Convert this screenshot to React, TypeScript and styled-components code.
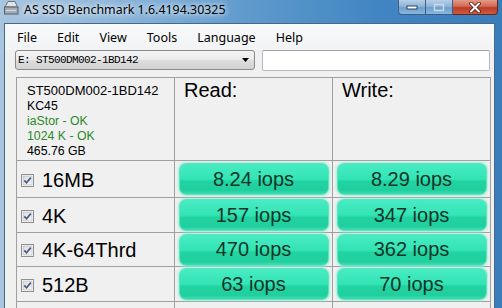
import { Fragment } from "react";
import styled, { createGlobalStyle } from "styled-components";

const GlobalStyle = createGlobalStyle`
  html, body {
    margin: 0;
    padding: 0;
    background: #3e82bf;
  }
  #root {
    width: 502px;
    height: 308px;
    overflow: hidden;
  }
`;

const Window = styled.div`
  width: 502px;
  height: 308px;
  display: flex;
  flex-direction: column;
  overflow: hidden;
  background: linear-gradient(90deg, #a9c5df 0%, #89b4da 25%, #5e99cc 50%, #4186c2 75%, #3a7dbb 100%);
`;

const TitleBar = styled.div`
  height: 23px;
  flex-shrink: 0;
  display: flex;
  align-items: flex-start;
  padding-left: 2px;
`;

const TitleIcon = styled.svg`
  width: 17px;
  height: 17px;
  flex-shrink: 0;
`;

const Title = styled.div`
  margin-left: 5px;
  margin-top: 2px;
  font-family: "Noto Sans", "Liberation Sans", sans-serif;
  font-size: 12.4px;
  line-height: 16px;
  color: #000;
  text-shadow: 0 0 5px #fff, 0 0 9px rgba(255, 255, 255, 0.85);
`;

const CaptionGroup = styled.div`
  margin-left: auto;
  margin-right: 4px;
  display: flex;
`;

const CaptionButton = styled.div<{ $kind: "min" | "max" | "close" }>`
  height: 15px;
  width: ${(p) => (p.$kind === "close" ? "45px" : p.$kind === "min" ? "28px" : "27px")};
  box-sizing: border-box;
  display: flex;
  align-items: center;
  justify-content: center;
  border: 1px solid ${(p) => (p.$kind === "close" ? "#5b2a25" : "#3d5f85")};
  border-top: none;
  border-left: ${(p) => (p.$kind === "min" ? "1px solid #3d5f85" : "none")};
  border-bottom-left-radius: ${(p) => (p.$kind === "min" ? "4px" : "0")};
  border-bottom-right-radius: ${(p) => (p.$kind === "close" ? "4px" : "0")};
  background: ${(p) =>
    p.$kind === "close"
      ? "linear-gradient(180deg, #e39a87 0%, #d06a55 45%, #bd3c27 55%, #d2583c 100%)"
      : "linear-gradient(180deg, #b6cfe6 0%, #8fb5d9 45%, #6e9ecb 55%, #8ab7de 100%)"};
`;

const Frame = styled.div`
  flex: 1;
  min-height: 0;
  display: flex;
  padding: 0 7px 0 4px;
`;

const Client = styled.div`
  flex: 1;
  display: flex;
  flex-direction: column;
  border: 1px solid #4a6785;
  border-bottom: none;
  background: #f0f0f0;
`;

const MenuBar = styled.div`
  height: 26px;
  flex-shrink: 0;
  display: flex;
  align-items: center;
  padding: 1px 0 0 2px;
  box-sizing: border-box;
  background: linear-gradient(180deg, #f8f9fa 0%, #f2f3f5 100%);
`;

const MenuItem = styled.span`
  padding: 0 10px;
  font-family: "Noto Sans", "Liberation Sans", sans-serif;
  font-size: 12.5px;
  color: #000;
`;

const ToolRow = styled.div`
  display: flex;
  align-items: flex-start;
  gap: 7px;
  padding-left: 10px;
  height: 21px;
`;

const DriveCombo = styled.div`
  width: 240px;
  height: 20px;
  box-sizing: border-box;
  display: flex;
  align-items: center;
  padding: 0 5px 0 2px;
  border: 1px solid #8a8a8a;
  border-radius: 3px;
  background: linear-gradient(180deg, #f3f3f3 0%, #ebebeb 48%, #dddddd 52%, #d2d2d2 100%);
  font-family: "Liberation Mono", monospace;
  font-size: 11px;
  letter-spacing: -0.6px;
  color: #000;
`;

const ComboArrow = styled.svg`
  margin-left: auto;
  width: 7px;
  height: 4px;
`;

const InfoBox = styled.div`
  width: 228px;
  height: 21px;
  box-sizing: border-box;
  border: 1px solid #b5b8bd;
  border-top-color: #9ea2a8;
  border-radius: 2px;
  background: #fff;
`;

const ResultGrid = styled.div`
  margin: 6px 0 0 11px;
  width: 475px;
  box-sizing: border-box;
  display: grid;
  grid-template-columns: 157px 157px 157px;
  grid-template-rows: 82px 36px 34px 33px 34px 30px;
  gap: 1px;
  padding: 1px;
  background: #a0a0a0;
`;

const Cell = styled.div`
  background: #f0f0f0;
  display: flex;
  align-items: center;
`;

const DiskInfo = styled(Cell)`
  flex-direction: column;
  align-items: flex-start;
  padding: 4px 0 0 10px;
  font-family: "Liberation Sans", Arial, sans-serif;
  color: #000;
`;

const DiskName = styled.div`
  font-size: 13px;
  line-height: 17px;
`;

const InfoLine = styled.div<{ $ok?: boolean }>`
  font-size: 12.3px;
  line-height: 15px;
  color: ${(p) => (p.$ok ? "#2a8a2a" : "#000")};
`;

const HeaderCell = styled(Cell)`
  align-items: flex-start;
  padding: 1px 0 0 9px;
  font-family: "Liberation Sans", Arial, sans-serif;
  font-size: 20px;
  line-height: 23px;
  color: #000;
`;

const LabelCell = styled(Cell)`
  padding: 2px 0 0 4px;
  gap: 8px;
  font-family: "Liberation Sans", Arial, sans-serif;
  font-size: 20px;
  color: #000;
`;

const CheckBox = styled.svg`
  width: 13px;
  height: 13px;
  flex-shrink: 0;
`;

const ValueCell = styled(Cell)`
  justify-content: center;
`;

const ResultButton = styled.div`
  width: 150px;
  height: 32px;
  box-sizing: border-box;
  display: flex;
  align-items: center;
  justify-content: center;
  border: 1px solid #62e3c0;
  border-radius: 7px;
  background: linear-gradient(180deg, #48ecc2 0%, #33e4b5 50%, #22d3a2 58%, #20cf9e 88%, #3fdcb2 100%);
  box-shadow: 0 0 2px 1px rgba(140, 240, 212, 0.8);
  font-family: "Liberation Sans", Arial, sans-serif;
  font-size: 20px;
  color: #123528;
`;

const results = [
  { name: "16MB", read: "8.24 iops", write: "8.29 iops" },
  { name: "4K", read: "157 iops", write: "347 iops" },
  { name: "4K-64Thrd", read: "470 iops", write: "362 iops" },
  { name: "512B", read: "63 iops", write: "70 iops" },
];

const menus = ["File", "Edit", "View", "Tools", "Language", "Help"];

const Check = () => (
  <CheckBox viewBox="0 0 13 13">
    <defs>
      <linearGradient id="cbg" x1="0" y1="0" x2="1" y2="1">
        <stop offset="0" stopColor="#d9dbde" />
        <stop offset="1" stopColor="#f7f7f7" />
      </linearGradient>
    </defs>
    <rect x="0.5" y="0.5" width="12" height="12" fill="#fff" stroke="#8e8f8f" />
    <rect x="2" y="2" width="9" height="9" fill="url(#cbg)" stroke="#b0b3b8" strokeWidth="0.6" />
    <path d="M3.3 6.4 L5.5 8.8 L9.8 3.6" fill="none" stroke="#4a5b86" strokeWidth="1.7" />
  </CheckBox>
);

const App = () => {
  return (
    <>
      <GlobalStyle />
      <Window>
        <TitleBar>
          <TitleIcon viewBox="0 0 17 17">
            <polygon points="3,7 6,1.5 13,1.5 15.5,7" fill="#dfe3e8" stroke="#6b7480" />
            <rect x="2.5" y="7" width="13.5" height="7" fill="#a3acb6" stroke="#59616b" />
            <line x1="4" y1="10.5" x2="14" y2="10.5" stroke="#d7dce2" />
          </TitleIcon>
          <Title>AS SSD Benchmark 1.6.4194.30325</Title>
          <CaptionGroup>
            <CaptionButton $kind="min">
              <svg width="12" height="6" viewBox="0 0 12 6">
                <rect x="1" y="2" width="10" height="3" fill="#fff" stroke="#2c4460" strokeWidth="1" />
              </svg>
            </CaptionButton>
            <CaptionButton $kind="max">
              <svg width="12" height="9" viewBox="0 0 12 9">
                <rect x="1.5" y="1.5" width="9" height="6" fill="none" stroke="#c7d8ea" strokeWidth="1.5" />
              </svg>
            </CaptionButton>
            <CaptionButton $kind="close">
              <svg width="14" height="11" viewBox="0 0 14 11">
                <path d="M3 1.5 L11 9.5 M11 1.5 L3 9.5" stroke="#4a1a14" strokeWidth="3.6" strokeLinecap="round" />
                <path d="M3 1.5 L11 9.5 M11 1.5 L3 9.5" stroke="#fff" strokeWidth="2" strokeLinecap="round" />
              </svg>
            </CaptionButton>
          </CaptionGroup>
        </TitleBar>
        <Frame>
          <Client>
            <MenuBar>
              {menus.map((m) => (
                <MenuItem key={m}>{m}</MenuItem>
              ))}
            </MenuBar>
            <ToolRow>
              <DriveCombo>
                E: ST500DM002-1BD142
                <ComboArrow viewBox="0 0 7 4">
                  <polygon points="0,0 7,0 3.5,4" fill="#000" />
                </ComboArrow>
              </DriveCombo>
              <InfoBox />
            </ToolRow>
            <ResultGrid>
              <DiskInfo>
                <DiskName>ST500DM002-1BD142</DiskName>
                <InfoLine>KC45</InfoLine>
                <InfoLine $ok>iaStor - OK</InfoLine>
                <InfoLine $ok>1024 K - OK</InfoLine>
                <InfoLine>465.76 GB</InfoLine>
              </DiskInfo>
              <HeaderCell>Read:</HeaderCell>
              <HeaderCell>Write:</HeaderCell>
              {results.map((r) => (
                <Fragment key={r.name}>
                  <LabelCell>
                    <Check />
                    {r.name}
                  </LabelCell>
                  <ValueCell>
                    <ResultButton>{r.read}</ResultButton>
                  </ValueCell>
                  <ValueCell>
                    <ResultButton>{r.write}</ResultButton>
                  </ValueCell>
                </Fragment>
              ))}
              <Cell />
              <Cell />
              <Cell />
            </ResultGrid>
          </Client>
        </Frame>
      </Window>
    </>
  );
};

export default App;
